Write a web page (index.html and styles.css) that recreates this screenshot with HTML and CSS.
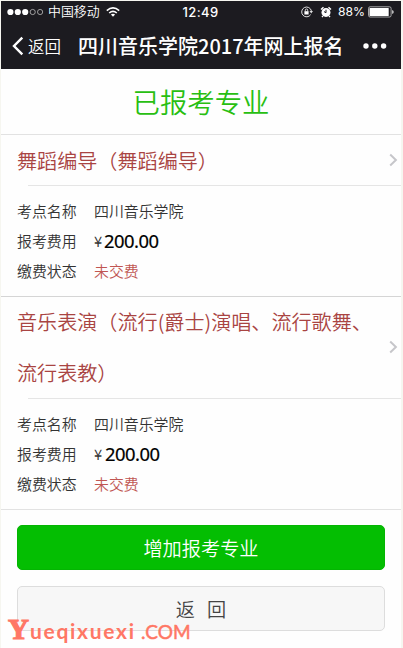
FILE: index.html
```html
<!DOCTYPE html>
<html lang="zh-CN">
<head>
<meta charset="utf-8">
<title>四川音乐学院2017年网上报名</title>
<link rel="stylesheet" href="styles.css">
</head>
<body>
<div class="phone">
  <header class="top">
    <div class="status">
      <div class="carrier">
        <svg width="37" height="8" viewBox="0 0 37 8"><g fill="#fff"><circle cx="3.4" cy="4" r="3.1"/><circle cx="10.8" cy="4" r="3.1"/><circle cx="18.2" cy="4" r="3.1"/></g><g fill="none" stroke="#bbb" stroke-width=".8"><circle cx="25.7" cy="4" r="2.6"/><circle cx="33.1" cy="4" r="2.6"/></g></svg>
        <span class="operator">中国移动</span>
        <svg class="wifi" width="14" height="10" viewBox="0 0 14 10"><g fill="none" stroke="#fff" stroke-width="1.6"><path d="M.8 3.6Q7-1.7 13.2 3.6"/><path d="M3.2 6Q7 2.7 10.8 6"/></g><path d="M4.9 7.5Q7 5.9 9.1 7.5L7 9.8Z" fill="#fff"/></svg>
      </div>
      <span class="clock">12:49</span>
      <div class="power">
        <svg width="12" height="12" viewBox="0 0 12 12"><path d="M9.7 8.6A4.9 4.9 0 1 1 10.4 5" fill="none" stroke="#ddd"/><path d="M8.5 5h3.5l-1.8 2.5z" fill="#ddd"/><rect x="3.4" y="5.2" width="4.2" height="3.3" fill="#fff"/><path d="M4.3 5.3V4.2a1.2 1.2 0 0 1 2.4 0v1.1" fill="none" stroke="#fff" stroke-width=".8"/></svg>
        <svg class="alarm" width="12" height="12" viewBox="0 0 12 12"><circle cx="6" cy="6.4" r="4.5" fill="#fff"/><path d="M1 3.5 3.5 1.3M11 3.5 8.5 1.3M3 10l-1 1M9 10l1 1" stroke="#fff" stroke-width="1.5"/><path d="M6 3.7v3L4 5.6" fill="none" stroke="#1c1b20"/></svg>
        <span class="percent">88%</span>
        <svg width="26" height="12" viewBox="0 0 26 12"><rect x=".5" y=".8" width="22.6" height="10.2" rx="1.6" fill="none" stroke="#ccc" stroke-width=".8"/><rect x="1.5" y="1.9" width="19.2" height="8" rx=".5" fill="#fff"/><path d="M24.2 4v4q1.5-.7 1.5-2t-1.5-2" fill="#ddd"/></svg>
      </div>
    </div>
    <nav class="nav">
      <svg width="12" height="20" viewBox="0 0 12 20"><path d="M10.3 1.7 2 10l8.3 8.3" fill="none" stroke="#fff" stroke-width="2.4"/></svg>
      <span class="back">返回</span>
      <h1>四川音乐学院2017年网上报名</h1>
      <svg class="more" width="24" height="6" viewBox="0 0 24 6"><g fill="#fff"><circle cx="3" cy="3" r="2.7"/><circle cx="11.8" cy="3" r="2.7"/><circle cx="20.6" cy="3" r="2.7"/></g></svg>
    </nav>
  </header>
  <h2 class="heading">已报考专业</h2>
  <section class="card first">
    <div class="major"><h3>舞蹈编导（舞蹈编导）</h3><svg width="9" height="14" viewBox="0 0 9 14"><path d="m1.2 1.5 5.7 5.5-5.7 5.5" fill="none" stroke="#c6c6ca" stroke-width="2"/></svg></div>
    <dl>
      <dt>考点名称</dt><dd>四川音乐学院</dd>
      <dt>报考费用</dt><dd><span class="yen">¥</span><span class="price">200.00</span></dd>
      <dt>缴费状态</dt><dd class="unpaid">未交费</dd>
    </dl>
  </section>
  <section class="card second">
    <div class="major"><h3>音乐表演（流行(爵士)演唱、流行歌舞、<br>流行表教）</h3><svg width="9" height="14" viewBox="0 0 9 14"><path d="m1.2 1.5 5.7 5.5-5.7 5.5" fill="none" stroke="#c6c6ca" stroke-width="2"/></svg></div>
    <dl>
      <dt>考点名称</dt><dd>四川音乐学院</dd>
      <dt>报考费用</dt><dd><span class="yen">¥</span><span class="price">200.00</span></dd>
      <dt>缴费状态</dt><dd class="unpaid">未交费</dd>
    </dl>
  </section>
  <div class="actions">
    <button class="add">增加报考专业</button>
    <button class="return">返<span class="gap"></span>回</button>
  </div>
  <div class="watermark"><span class="cap">Y</span><span class="site">ueqixuexi</span><span class="com">.COM</span></div>
</div>
</body>
</html>
```
FILE: styles.css
```css
* { box-sizing: border-box; }
body {
  margin: 0;
  background: #f6f6f0;
  font-family: "Noto Sans CJK SC", sans-serif;
  color: #333;
}
h1, h2, h3, dl, dd { margin: 0; font-weight: 400; }
svg { display: block; flex: none; }
.phone {
  position: relative;
  width: 400px;
  height: 647px;
  margin: 1px 0 0 1px;
  background: #fefefe;
  overflow: hidden;
}
.top { height: 68px; background: #1c1b20; color: #fff; }
.status {
  display: grid;
  grid-template-columns: 1fr auto 1fr;
  align-items: center;
  height: 22px;
  padding: 0 7px 0 6px;
}
.carrier, .power { display: flex; align-items: center; }
.power { justify-content: flex-end; }
.operator { margin: -1px 0 1px 4px; font-size: 12.9px; line-height: 20px; font-weight: 350; }
.wifi { margin-left: 6px; }
.clock { font: 500 13px/20px Inter, sans-serif; letter-spacing: .4px; }
.alarm { margin-left: 7px; }
.percent { margin: 0 3px 0 6px; font: 400 12.2px/20px Inter, sans-serif; }
.nav { display: flex; align-items: center; height: 46px; padding-left: 11px; }
.back { width: 36px; margin-left: 4px; font-size: 16.5px; line-height: 40px; font-weight: 350; white-space: nowrap; }
.nav h1 { width: 266px; margin-left: 14px; font-size: 20px; line-height: 40px; font-weight: 500; white-space: nowrap; }
.more { margin-left: 19px; }
.heading {
  height: 65px;
  font-size: 27.4px;
  line-height: 65px;
  font-weight: 350;
  text-align: center;
  color: #28bf12;
}
.card { border-top: 1px solid #e2e2e2; }
.card.first { height: 162px; }
.card.second { height: 213px; border-top-color: #d5d5d5; }
.major {
  display: flex;
  align-items: center;
  justify-content: space-between;
  padding: 0 3px 0 16px;
  color: #a94442;
}
.major h3 { font-size: 20.1px; line-height: 51px; font-weight: 350; white-space: nowrap; }
.first .major { height: 50px; }
.second .major { height: 101px; padding-bottom: 2px; }
dl {
  display: grid;
  grid-template-columns: 77px 1fr;
  grid-auto-rows: 30px;
  margin-left: 27px;
  padding-top: 10px;
  border-top: 1px solid #e5e5e5;
  font-size: 14.9px;
  line-height: 30px;
  font-weight: 350;
}
dt { margin-left: -11px; white-space: nowrap; }
dd { margin-left: -11px; display: flex; font-weight: 350; }
.yen { width: 10px; }
.second .yen { width: 11px; }
.price { font: 400 18.4px/29px "Noto Sans", "Open Sans", sans-serif; letter-spacing: -.5px; color: #000; -webkit-text-stroke: .2px #000; }
.unpaid { color: #c05652; }
.actions {
  display: flex;
  flex-direction: column;
  gap: 16px;
  padding: 15px 16px;
  border-top: 1px solid #e2e2e2;
}
button {
  display: block;
  height: 45px;
  padding: 0;
  border: 1px solid #ddd;
  border-radius: 5px;
  background: #f7f7f7;
  color: #444;
  font: 350 19.2px/43px "Noto Sans CJK SC", sans-serif;
}
.return { padding-top: 1px; }
.add { padding-top: 1px; background: #04be02; border-color: #04b502; color: #fff; }
.gap { display: inline-block; width: 12px; }
.watermark {
  position: absolute;
  left: 7px;
  bottom: 2px;
  display: flex;
  align-items: baseline;
  height: 34px;
  color: #ff7765;
  white-space: nowrap;
}
.cap { width: 22px; font: 700 29px/34px "Liberation Serif", serif; -webkit-text-stroke: 1.2px #ff7765; }
.site { width: 111px; font: 700 21px/34px Lato, sans-serif; letter-spacing: 1.7px; }
.com { font: 400 19px/34px Lato, sans-serif; letter-spacing: .1px; -webkit-text-stroke: .5px #ff7765; }
```
